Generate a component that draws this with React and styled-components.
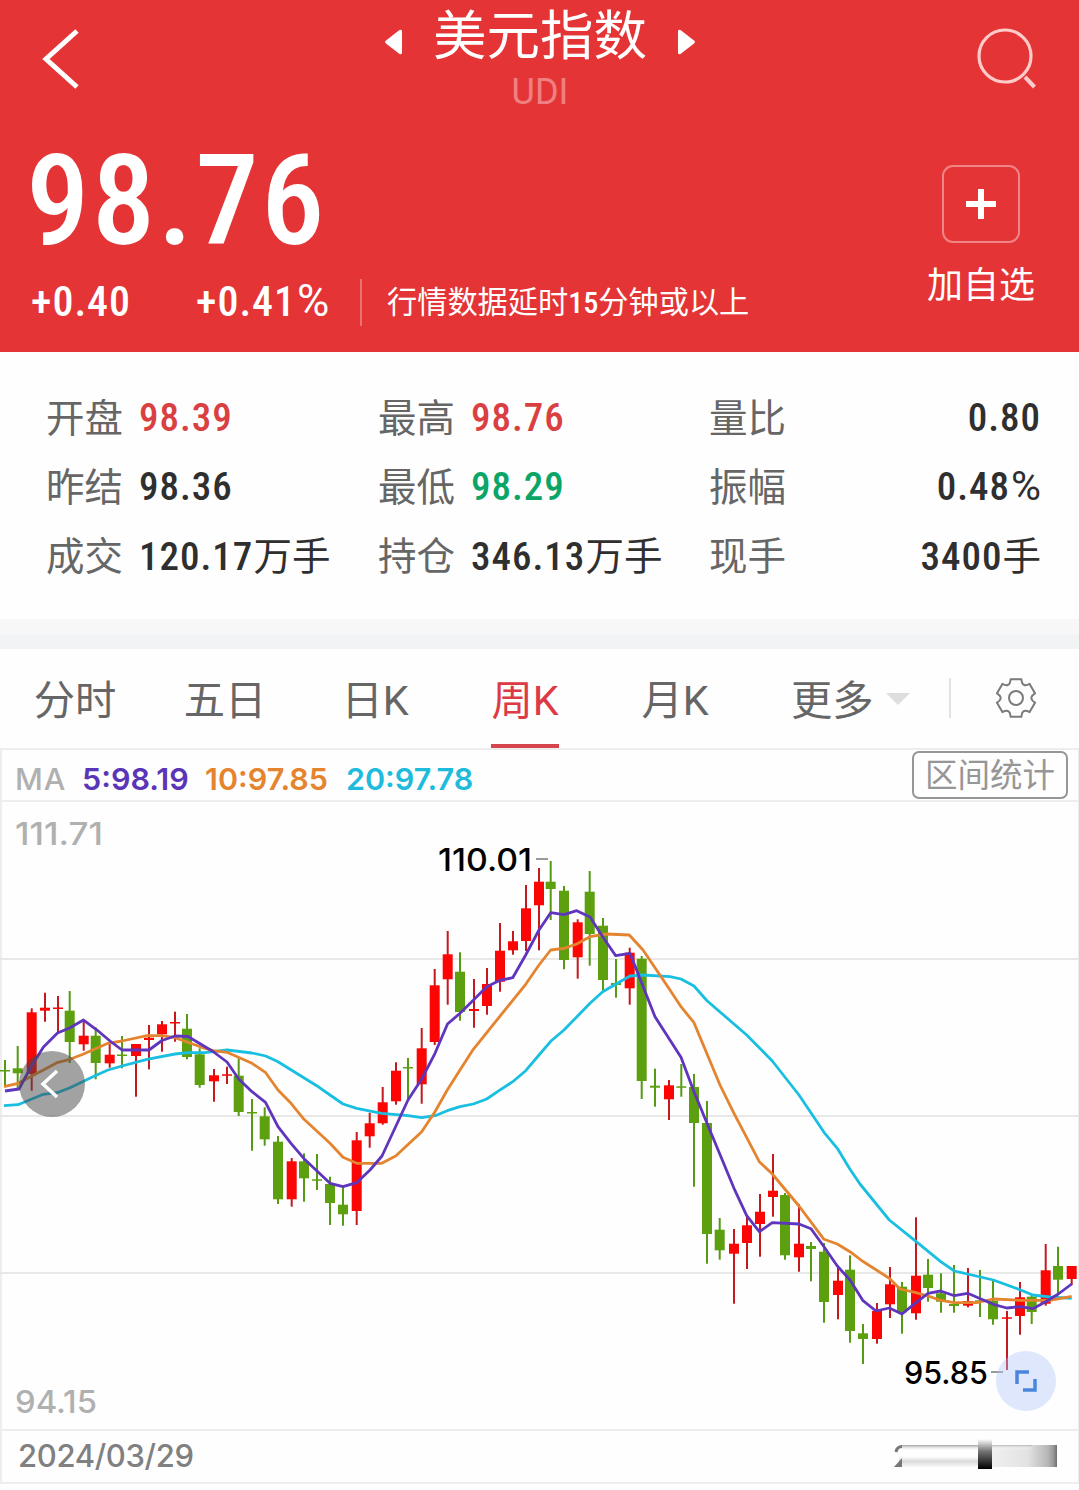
import React from 'react';
import styled, { createGlobalStyle } from 'styled-components';

const GlobalStyle = createGlobalStyle`
	* {
		box-sizing: border-box;
	}
	body {
		margin: 0;
		background-color: #fefefe;
		font-family: Roboto, 'Noto Sans CJK SC', sans-serif;
		line-height: 1.2;
	}
`;

const numFont = `'Roboto Condensed', Roboto, 'Noto Sans CJK SC', sans-serif`;
const chartFont = `Inter, 'Noto Sans CJK SC', sans-serif`;

const Page = styled.div`
	width: 1079px;
	height: 1490px;
	overflow: hidden;
	background-color: #fefefe;
`;

const Header = styled.header`
	height: 352px;
	color: #fff;
	background-color: #e43436;
`;

const NavBar = styled.div`
	display: flex;
	justify-content: space-between;
	height: 120px;
	padding: 0 40px 0 41px;
`;

const IconButton = styled.button`
	display: flex;
	align-items: flex-start;
	width: 64px;
	padding: 26px 0 0;
	border: none;
	color: #fff;
	background: none;
	justify-content: ${({ $end }) => ($end ? 'flex-end' : 'flex-start')};
`;

const TitleBox = styled.div`
	display: flex;
	flex-direction: column;
	align-items: center;
`;

const TitleRow = styled.div`
	display: flex;
	align-items: center;
	gap: 30px;
	height: 70px;
`;

const Arrow = styled.svg`
	margin-top: 14px;
	transform: ${({ $flip }) => ($flip ? 'scaleX(-1)' : 'none')};
`;

const Title = styled.h1`
	margin: 0;
	padding-top: 4px;
	font-size: 53.5px;
	font-weight: 400;
	line-height: 70px;
`;

const Code = styled.div`
	font-size: 36px;
	line-height: 44px;
	color: rgba(255, 255, 255, 0.4);
`;

const Quote = styled.div`
	display: flex;
	justify-content: space-between;
	padding: 0 44px 0 31px;
`;

const Price = styled.div`
	height: 159px;
	margin-left: -5px;
	font-family: ${numFont};
	font-size: 127px;
	font-weight: 500;
	line-height: 161px;
	letter-spacing: 2.3px;
`;

const ChangeRow = styled.div`
	display: flex;
	align-items: center;
	height: 46px;
`;

const Change = styled.span`
	width: 165px;
	font-family: ${numFont};
	font-size: 42px;
	font-weight: 500;
	line-height: 50px;
	letter-spacing: 1px;
`;

const Notice = styled.span`
	margin-left: -1px;
	padding-left: 25px;
	border-left: 2px solid rgba(255, 255, 255, 0.3);
	font-family: ${numFont};
	font-size: 30.2px;
	line-height: 47px;

	b {
		font-weight: 500;
	}
`;

// the condensed percent sign is too narrow next to the spaced digits
const Percent = styled.span`
	margin-left: 1px;
	font-family: Roboto, sans-serif;
	font-size: 1.05em;
	font-weight: 400;
	line-height: 1;
	letter-spacing: 0;
`;

const Watch = styled.div`
	display: flex;
	flex-direction: column;
	align-items: center;
	padding-top: 45px;
	font-size: 36px;
	line-height: 50px;
`;

const PlusBox = styled.div`
	display: flex;
	align-items: center;
	justify-content: center;
	width: 78px;
	height: 78px;
	margin-bottom: 18px;
	border: 2px solid rgba(255, 255, 255, 0.4);
	border-radius: 11px;
`;

const Stats = styled.section`
	display: grid;
	grid-template-columns: 332px 331px 332px;
	grid-auto-rows: 69px;
	height: 267px;
	padding: 32px 38px 0 46px;
`;

const Stat = styled.div`
	display: flex;
	align-items: center;
	justify-content: ${({ $spread }) => ($spread ? 'space-between' : 'flex-start')};
	gap: 16px;
	font-size: 38.5px;
	line-height: 69px;
	color: #666;
	white-space: nowrap;
`;

const tones = { up: '#da3f42', down: '#0aa567', flat: '#2f2f2f' };

const StatValue = styled.span`
	font-family: ${numFont};
	font-size: 39px;
	font-weight: 500;
	letter-spacing: 1px;
	color: ${({ $tone }) => tones[$tone]};
`;

const Unit = styled.span`
	font-weight: 400;
	font-size: 38.5px;
	letter-spacing: 0;
`;

const Band = styled.div`
	height: 30px;
	border-top: 16px solid #f7f7f7;
	background-color: #f2f3f5;
`;

const Tabs = styled.nav`
	display: flex;
	height: 101px;
	border-bottom: 2px solid #ededed;
`;

const Tab = styled.div`
	display: flex;
	justify-content: center;
	width: 150px;
`;

const TabLabel = styled.span`
	height: 99px;
	border-bottom: ${({ $active }) => ($active ? '4px solid #d5464c' : '4px solid transparent')};
	font-size: 41.3px;
	line-height: 105px;
	color: ${({ $active }) => ($active ? '#dc3a45' : '#666')};
`;

const More = styled.div`
	display: flex;
	align-items: center;
	width: 200px;
	height: 99px;
	padding-left: 41px;
	gap: 12px;
`;

const MoreLabel = styled.span`
	padding-top: 6px;
	font-size: 41.3px;
	color: #666;
`;

const Caret = styled.span`
	border: 12px solid transparent;
	border-top-color: #dedede;
	border-bottom: none;
`;

const Settings = styled.div`
	display: flex;
	align-items: center;
	height: 40px;
	margin-top: 29px;
	margin-left: -1px;
	padding-left: 45px;
	border-left: 2px solid #e2e2e2;
`;

const ChartPanel = styled.section`
	position: relative;
	border: solid #ededed;
	border-width: 0 1px 0 2px;
`;

const MaRow = styled.div`
	display: flex;
	align-items: center;
	height: 52px;
	padding: 0 10px 0 13px;
	border-bottom: 2px solid #ededed;
	font-family: ${chartFont};
	font-size: 30.5px;
`;

const MaItem = styled.span`
	width: ${({ $width }) => $width}px;
	padding-top: 8px;
	color: ${({ $color }) => $color};
	font-weight: ${({ $light }) => ($light ? 500 : 600)};
	letter-spacing: ${({ $light }) => ($light ? '1px' : 0)};
	white-space: nowrap;
`;

const RangeButton = styled.button`
	height: 48px;
	margin-left: auto;
	padding: 0 11px;
	border: 2px solid #969696;
	border-radius: 7px;
	background: none;
	font-family: Roboto, 'Noto Sans CJK SC', sans-serif;
	font-size: 32.5px;
	line-height: 47px;
	color: #969696;
`;

const Chart = styled.svg`
	display: block;
	margin-left: -2px;
	font-family: ${chartFont};
	font-weight: 500;
`;

const ScrollBack = styled.div`
	position: absolute;
	left: 17px;
	top: 301px;
	display: flex;
	align-items: center;
	justify-content: center;
	width: 66px;
	height: 66px;
	padding-right: 4px;
	border-radius: 50%;
	background-color: rgba(70, 70, 70, 0.5);
`;

const Expand = styled.div`
	position: absolute;
	right: 22px;
	top: 601px;
	display: flex;
	align-items: center;
	justify-content: center;
	width: 60px;
	height: 60px;
	border-radius: 50%;
	background-color: rgba(175, 198, 248, 0.4);
`;

const DateRow = styled.div`
	display: flex;
	align-items: center;
	justify-content: space-between;
	height: 55px;
	padding: 0 19px 2px 16px;
	border: solid #ededed;
	border-width: 2px 0;
	font-family: ${chartFont};
	font-size: 31px;
	font-weight: 500;
	letter-spacing: -0.35px;
	color: #808080;
`;

const SmudgeSvg = styled.svg`
	margin-top: -2px;
	filter: blur(0.6px);
`;

const stats = [
	{ label: '开盘', value: '98.39', tone: 'up' },
	{ label: '最高', value: '98.76', tone: 'up' },
	{ label: '量比', value: '0.80', tone: 'flat', spread: true },
	{ label: '昨结', value: '98.36', tone: 'flat' },
	{ label: '最低', value: '98.29', tone: 'down' },
	{ label: '振幅', value: '0.48', percent: true, tone: 'flat', spread: true },
	{ label: '成交', value: '120.17', unit: '万手', tone: 'flat' },
	{ label: '持仓', value: '346.13', unit: '万手', tone: 'flat' },
	{ label: '现手', value: '3400', unit: '手', tone: 'flat', spread: true },
];

const tabs = ['分时', '五日', '日K', '周K', '月K'];

// x, high, low, body top, body bottom, rising
const candles = [
	[5, 1060, 1087, 1070, 1071.5, 0],
	[17.7, 1046, 1088, 1068.3, 1073.3, 0],
	[31.7, 1008.3, 1090.7, 1012.3, 1074, 1],
	[45, 992.7, 1021.7, 1007.7, 1010.7, 1],
	[58, 996, 1033, 1007.5, 1009, 1],
	[69.7, 991, 1063, 1010.7, 1042, 0],
	[83.7, 1020, 1050.7, 1035.7, 1044.3, 1],
	[95.7, 1027.3, 1079.3, 1035.7, 1063, 0],
	[109.7, 1044, 1067.7, 1054.7, 1063.3, 1],
	[122, 1036, 1068.3, 1054.5, 1056, 0],
	[136, 1044, 1096.7, 1044, 1056, 1],
	[149, 1025, 1069.3, 1037.7, 1040, 1],
	[162, 1021, 1051.7, 1024.3, 1034.3, 1],
	[175, 1011.7, 1041.7, 1022, 1023.5, 1],
	[187, 1014, 1059.3, 1028.7, 1057, 0],
	[199.7, 1048.3, 1087.7, 1054.3, 1085, 0],
	[214, 1069, 1101.7, 1075.3, 1081.3, 1],
	[227, 1066.7, 1084, 1074.3, 1075.8, 1],
	[238.7, 1058.3, 1116, 1075.7, 1112, 0],
	[252, 1099, 1150.7, 1112, 1113.5, 0],
	[264.7, 1107.3, 1145.7, 1116.3, 1139.3, 0],
	[278, 1136, 1204, 1141.7, 1199.3, 0],
	[291.7, 1158, 1206.7, 1161.3, 1199.3, 1],
	[304, 1153.3, 1201.7, 1161.3, 1178.3, 0],
	[317, 1154, 1190, 1179.3, 1180.8, 0],
	[330, 1176.7, 1225, 1184, 1203, 0],
	[343, 1187.3, 1225.7, 1204.7, 1214.3, 0],
	[356.7, 1132, 1225, 1140.3, 1211, 1],
	[369.7, 1112.7, 1147.7, 1123.3, 1136.3, 1],
	[382.7, 1087, 1124.7, 1102.3, 1123.3, 1],
	[396, 1062.3, 1104.7, 1070.7, 1101.3, 1],
	[408, 1058, 1100, 1067, 1068.5, 0],
	[421.7, 1028, 1103.7, 1048.3, 1084.3, 1],
	[434.7, 969, 1045, 985.3, 1042, 1],
	[447.7, 931, 1004.7, 954.3, 979.3, 1],
	[460, 952.3, 1020.7, 971.7, 1012, 0],
	[474, 979, 1027.7, 1009, 1011, 1],
	[487, 968, 1014.7, 984, 1006, 1],
	[500, 923, 991.7, 950.7, 981.7, 1],
	[513, 931, 954.7, 941.3, 950.3, 1],
	[526, 885, 951, 908.3, 941, 1],
	[539, 868, 950.3, 881.7, 905.3, 1],
	[550.7, 861, 920, 881.7, 889, 0],
	[564, 886, 969.3, 890.7, 960, 0],
	[577.7, 919.3, 978.7, 922.3, 957.3, 1],
	[589.7, 871, 965.7, 891.7, 934, 0],
	[603, 918, 990.7, 925.7, 980, 0],
	[616, 959, 997.7, 983, 985, 0],
	[629.7, 947.7, 1004.7, 952.7, 988.3, 1],
	[641.7, 956, 1099, 958.7, 1081, 0],
	[655, 1068.7, 1106.7, 1085.7, 1087.7, 0],
	[669, 1080, 1120, 1085.3, 1099.3, 1],
	[681.3, 1064, 1096.7, 1086.3, 1087.8, 0],
	[694, 1074, 1186.7, 1087, 1123, 0],
	[707, 1101, 1263.7, 1123, 1234, 0],
	[719.7, 1218, 1259.7, 1229.7, 1250.3, 0],
	[734, 1229, 1303.7, 1243.7, 1253.7, 1],
	[747, 1215, 1269, 1225.3, 1243, 1],
	[760, 1194, 1256.7, 1211.7, 1224, 1],
	[773, 1154, 1216.7, 1190.7, 1197, 1],
	[785, 1193, 1259.7, 1195, 1255.3, 0],
	[799, 1204, 1271.7, 1243.7, 1257.3, 1],
	[811, 1242, 1281.3, 1246, 1249, 0],
	[824, 1243, 1322.7, 1251.7, 1302, 0],
	[838, 1266.7, 1319.3, 1280.7, 1295, 1],
	[850, 1255.3, 1342.7, 1269.7, 1331, 0],
	[863, 1324, 1364, 1333.3, 1339, 0],
	[877, 1303, 1343.7, 1311, 1339, 1],
	[890, 1267, 1318, 1284.3, 1304.3, 1],
	[902, 1282, 1333.7, 1286.7, 1312.3, 0],
	[916, 1217.3, 1319.7, 1275.7, 1313.3, 1],
	[928, 1259, 1301.7, 1274.7, 1288, 0],
	[941, 1273.3, 1312.7, 1293.3, 1301.7, 0],
	[954, 1265, 1312.7, 1304, 1306, 0],
	[968, 1268, 1307.3, 1301, 1305.7, 1],
	[980, 1270, 1317, 1300.3, 1301.8, 0],
	[993, 1280, 1324.7, 1300.7, 1319.3, 0],
	[1007, 1311, 1370, 1317.3, 1318.8, 1],
	[1020, 1282, 1334.7, 1297.3, 1316, 1],
	[1031.7, 1295, 1324, 1296.7, 1312, 0],
	[1045.7, 1244, 1305.7, 1270.3, 1303.7, 1],
	[1058, 1246.7, 1294, 1266, 1279.7, 0],
	[1071.7, 1266, 1285, 1266, 1279, 1],
];

const averages = [
	{
		color: '#18bfe0',
		points:
			'4,1105.7 18,1104.7 43.3,1094.3 57,1092.7 70,1087.7 95,1075.7 108,1070 122,1066 147,1059.3 175,1054 188,1052.7 205,1052.7 227,1050 252,1053 265.7,1056 278,1061.7 316.7,1085.7 330,1095 343,1104 356.7,1108.3 381.7,1113.3 408,1115.7 421.7,1117.7 435,1115.7 447.3,1110.7 460,1106.7 473.3,1104 486.7,1099 499,1090.7 512.7,1081.7 525.7,1070.7 539,1055 550.7,1041.3 564,1030 590,1003.3 602.7,991.7 615.7,984.3 630,976 643,975 670,976.7 681,979 694,986 707,1000.7 746.7,1035 772.3,1061 799,1095 824,1132.3 837.3,1148.3 850,1169.3 860,1184 889.3,1220 915,1240.7 940.7,1261.7 954.3,1271 993.3,1280 1020,1289.7 1032.7,1295 1050,1297 1071.7,1298.3',
	},
	{
		color: '#e5842f',
		points:
			'4,1086.7 18,1083.3 32,1076 57,1062.7 70,1059.3 83,1054.3 108,1043.3 122,1041 147,1035.7 162,1035.7 175,1037.7 201.7,1047.3 213,1050.7 227,1052.3 252,1063.3 265.7,1072.7 278,1090 291,1103.3 304,1119.3 330,1143.3 343,1157.3 356.7,1163.3 381.7,1163.3 395.7,1156 421.7,1131.7 435,1111.7 447.3,1090 460,1070 473.3,1049.3 525.7,984.3 539,965 550.7,950 564,948.3 576.7,944 590,936.7 606.7,934 629.3,935 643,950 670,990 681,1006.7 694,1022.7 720,1085 734,1113.3 759.3,1161.7 772.3,1174 799,1206 824,1239.3 837.3,1244 850,1251.7 862.3,1261 889.3,1278.3 900,1289 915,1292.3 928,1296 940.7,1300.3 954.3,1302.7 976.7,1302.7 993.3,1299 1020,1300.3 1050,1300.3 1071.7,1296.3',
	},
	{
		color: '#5f35bd',
		points:
			'5,1091 19,1089 32,1065 43.5,1047 57.5,1033 69.5,1028 83.5,1020 97,1030 110,1041 122,1050 149,1050 162,1040.5 175,1036 188,1036.5 213,1051.5 227,1062 238.7,1079 252,1091.7 265.5,1102.3 278,1126.7 291,1143.3 304,1158.7 330,1183.3 343,1186.7 356.7,1182.7 370,1170 382,1156 408,1100 421.7,1079 435,1053.3 447.5,1024 460,1013.3 473.5,1000 486.7,986.7 499,980.7 512.7,977.7 525.7,955 539,930 550.7,912.7 564,914.7 576.7,910.7 590,917 602.7,936.7 615.7,955.7 630,953.3 641.7,983 655,1016.7 681,1057.3 694,1091.7 707,1123.3 734,1188.3 746.7,1215.7 759.3,1231.7 772.3,1222.7 799,1224 811,1228.7 824,1246.7 837.3,1266 850,1280 863,1300.7 876,1311 889.3,1308 902,1314 915,1303.3 928,1293.3 940.7,1291 954.3,1295.7 967.7,1293.3 981,1299 993.3,1304.3 1006.7,1308 1020,1306.7 1032.7,1308.7 1045.7,1301.7 1058.3,1294 1071.7,1284',
	},
];

// six teeth around the hub
const gearPath = () => {
	const parts = [];
	for (let i = 0; i < 6; i += 1) {
		const a = (i * Math.PI) / 3 - Math.PI / 2;
		const at = (r, w) =>
			`${(20 + r * Math.cos(a) - w * Math.sin(a)).toFixed(1)} ${(
				20 +
				r * Math.sin(a) +
				w * Math.cos(a)
			).toFixed(1)}`;
		parts.push(
			`${i ? 'L' : 'M'}${at(13.6, -7.2)} Q${at(15, -5.6)} ${at(18.8, -5.4)} L${at(18.8, 5.4)} Q${at(15, 5.6)} ${at(13.6, 7.2)}`
		);
	}
	return `${parts.join(' ')}Z`;
};

const TriangleIcon = ({ flip }) => (
	<Arrow $flip={flip} width="19" height="28" viewBox="0 0 19 28">
		<path
			d="M2 12.6 15.5 2 Q18 1 18 3.5 V24.5 Q18 27 15.5 26 L2 15.4 Q0 14 2 12.6Z"
			fill="#fff"
		/>
	</Arrow>
);

const KLineChart = () => (
	<Chart width="1079" height="627" viewBox="0 802 1079 627">
		{[959, 1116, 1273].map((y) => (
			<line key={y} x1="0" x2="1079" y1={y} y2={y} stroke="#e8e8e8" strokeWidth="2" />
		))}
		{candles.map(([x, high, low, top, bottom, rising]) => (
			<g key={x}>
				<rect x={x - 1} y={high} width="2" height={low - high} fill={rising ? '#c4191f' : '#559a12'} />
				<rect x={x - 5} y={top} width="10" height={bottom - top} fill={rising ? '#fb0505' : '#5da00f'} />
			</g>
		))}
		{averages.map(({ color, points }) => (
			<polyline
				key={color}
				points={points}
				fill="none"
				stroke={color}
				strokeWidth="2.8"
				strokeLinejoin="round"
			/>
		))}
		<text x="15" y="844.5" fontSize="31" textLength="88" lengthAdjust="spacingAndGlyphs" fill="#b0b0b0">
			111.71
		</text>
		<text x="15" y="1412.5" fontSize="31" textLength="82" lengthAdjust="spacingAndGlyphs" fill="#b0b0b0">
			94.15
		</text>
		<text x="438" y="870.5" fontSize="31" textLength="94" lengthAdjust="spacingAndGlyphs" fill="#000">
			110.01
		</text>
		<line x1="536" x2="548" y1="859" y2="859" stroke="#777" strokeWidth="1.5" />
		<text x="904" y="1383.5" fontSize="31" textLength="84" lengthAdjust="spacingAndGlyphs" fill="#000">
			95.85
		</text>
		<line x1="991" x2="1003" y1="1372" y2="1372" stroke="#777" strokeWidth="1.5" />
	</Chart>
);

const SmudgedDate = () => (
	<SmudgeSvg width="166" height="34" viewBox="0 0 166 34">
		<defs>
			<linearGradient id="fadeDown" x1="0" x2="0" y1="0" y2="1">
				<stop offset="0" stopColor="#a4a4a4" />
				<stop offset="0.4" stopColor="#e4e4e4" />
				<stop offset="1" stopColor="#fff" stopOpacity="0" />
			</linearGradient>
			<linearGradient id="fadeUp" x1="0" x2="0" y1="0" y2="1">
				<stop offset="0" stopColor="#fafafa" />
				<stop offset="0.45" stopColor="#dadada" />
				<stop offset="1" stopColor="#fafafa" />
			</linearGradient>
			<linearGradient id="block" x1="0" x2="0" y1="0" y2="1">
				<stop offset="0" stopColor="#fff" />
				<stop offset="0.4" stopColor="#777" />
				<stop offset="1" stopColor="#000" />
			</linearGradient>
			<linearGradient id="tail" x1="0" x2="1" y1="0" y2="0">
				<stop offset="0" stopColor="#f0f0f0" />
				<stop offset="0.55" stopColor="#e2e2e2" />
				<stop offset="0.85" stopColor="#b8b8b8" />
				<stop offset="0.94" stopColor="#9a9a9a" />
				<stop offset="1" stopColor="#707070" />
			</linearGradient>
		</defs>
		<rect x="8" y="7" width="77" height="6" fill="url(#fadeDown)" />
		<rect x="6" y="19" width="79" height="10" fill="url(#fadeUp)" />
		<path d="M3 14 Q4 8.500 9 8.500" fill="none" stroke="#777" strokeWidth="3" />
		<path d="M1 29 9 20 V29Z" fill="#777" />
		<rect x="99" y="7" width="65" height="22" fill="url(#tail)" />
		<rect x="99" y="7" width="40" height="5" fill="url(#fadeDown)" opacity="0.7" />
		<rect x="85" y="1" width="14" height="30" fill="url(#block)" />
	</SmudgeSvg>
);

const App = () => {
	return (
		<Page>
			<GlobalStyle />
			<Header>
				<NavBar>
					<IconButton aria-label="返回">
						<svg width="42" height="66" viewBox="0 0 42 66" fill="none">
							<path d="M36 5 5 33 36 61" stroke="#fff" strokeWidth="5" />
						</svg>
					</IconButton>
					<TitleBox>
						<TitleRow>
							<TriangleIcon />
							<Title>美元指数</Title>
							<TriangleIcon flip />
						</TitleRow>
						<Code>UDI</Code>
					</TitleBox>
					<IconButton aria-label="搜索" $end>
						<svg width="64" height="64" viewBox="0 0 64 64" fill="none" stroke="#ffcbc9">
							<circle cx="30" cy="30" r="26" strokeWidth="3.2" />
							<path d="M50 51 59.5 61" strokeWidth="4" />
						</svg>
					</IconButton>
				</NavBar>
				<Quote>
					<div>
						<Price>98.76</Price>
						<ChangeRow>
							<Change>+0.40</Change>
							<Change>
								+0.41<Percent>%</Percent>
							</Change>
							<Notice>
								行情数据延时<b>15</b>分钟或以上
							</Notice>
						</ChangeRow>
					</div>
					<Watch>
						<PlusBox>
							<svg width="30" height="30" viewBox="0 0 30 30">
								<path d="M15 0V30M0 15H30" stroke="#fff" strokeWidth="6" />
							</svg>
						</PlusBox>
						加自选
					</Watch>
				</Quote>
			</Header>

			<Stats>
				{stats.map(({ label, value, percent, unit, tone, spread }) => (
					<Stat key={label} $spread={spread}>
						{label}
						<StatValue $tone={tone}>
							{value}
							{percent && <Percent>%</Percent>}
							{unit && <Unit>{unit}</Unit>}
						</StatValue>
					</Stat>
				))}
			</Stats>
			<Band />

			<Tabs>
				{tabs.map((name) => (
					<Tab key={name}>
						<TabLabel $active={name === '周K'}>{name}</TabLabel>
					</Tab>
				))}
				<More>
					<MoreLabel>更多</MoreLabel>
					<Caret />
				</More>
				<Settings>
					<svg width="40" height="40" viewBox="0 0 40 40" fill="none" stroke="#7a7a7a" strokeWidth="2">
						<path d={gearPath()} strokeLinejoin="round" />
						<circle cx="20" cy="20" r="7" />
					</svg>
				</Settings>
			</Tabs>

			<ChartPanel>
				<MaRow>
					<MaItem $width={67} $color="#b0b0b0" $light>
						MA
					</MaItem>
					<MaItem $width={123} $color="#5a35b8">
						5:98.19
					</MaItem>
					<MaItem $width={141} $color="#e5842f">
						10:97.85
					</MaItem>
					<MaItem $width={141} $color="#1fbbdc">
						20:97.78
					</MaItem>
					<RangeButton>区间统计</RangeButton>
				</MaRow>
				<KLineChart />
				<ScrollBack>
					<svg width="20" height="30" viewBox="0 0 20 30" fill="none">
						<path d="M17 2 3 15 17 28" stroke="#fff" strokeWidth="3.5" />
					</svg>
				</ScrollBack>
				<Expand>
					<svg width="22" height="22" viewBox="0 0 22 22" fill="none" stroke="#4a86dc" strokeWidth="3.5">
						<path d="M2 14V2H14M20 9V20H8" />
					</svg>
				</Expand>
				<DateRow>
					<span>2024/03/29</span>
					<SmudgedDate />
				</DateRow>
			</ChartPanel>
		</Page>
	);
};

export default App;
